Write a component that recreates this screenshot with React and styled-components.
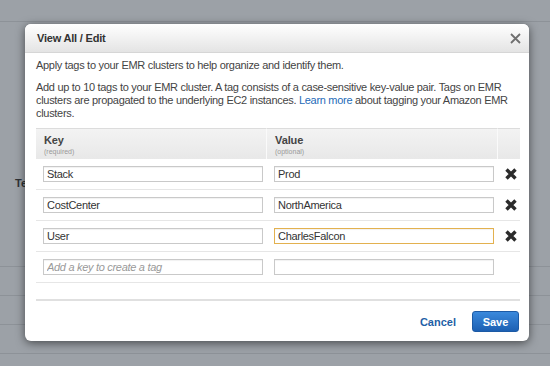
import React from "react";
import styled, { createGlobalStyle } from "styled-components";

const GlobalStyle = createGlobalStyle`
  body {
    margin: 0;
    font-family: "Liberation Sans", Arial, sans-serif;
  }
`;

const Page = styled.div`
  position: relative;
  width: 550px;
  height: 366px;
  overflow: hidden;
  background: #9ca1a7;
`;

const TopBar = styled.div`
  height: 21px;
  border-bottom: 1px solid #8d9298;
`;

const PageLabel = styled.div`
  margin: 154px 0 0 15px;
  font-size: 11px;
  line-height: 14px;
  font-weight: bold;
  color: #2f3236;
`;

const PageRows = styled.div`
  margin-top: 76px;
`;

const PageRow = styled.div`
  height: 28px;
  border-top: 1px solid #8d9298;
`;

const Modal = styled.div`
  position: absolute;
  left: 25px;
  top: 24px;
  width: 504px;
  height: 317px;
  display: flex;
  flex-direction: column;
  background: #fff;
  border-radius: 6px;
  box-shadow: 0 2px 10px rgba(0, 0, 0, 0.55);
  overflow: hidden;
`;

const Header = styled.div`
  height: 28px;
  flex: none;
  display: flex;
  align-items: center;
  justify-content: space-between;
  padding: 0 8px 0 12px;
  background: linear-gradient(#ffffff, #e4e4e4);
  border-bottom: 1px solid #d6d6d6;
`;

const Title = styled.div`
  font-size: 11px;
  letter-spacing: -0.2px;
  font-weight: bold;
  color: #333;
`;

const CloseButton = styled.button`
  border: 0;
  padding: 0;
  background: none;
  display: flex;
  cursor: pointer;
`;

const Body = styled.div`
  flex: 1;
  display: flex;
  flex-direction: column;
  padding: 0 9px 0 11px;
`;

const Text = styled.p`
  margin: ${(p) => p.$top}px 0 0;
  font-size: 11px;
  letter-spacing: -0.3px;
  line-height: 13px;
  color: #444;
`;

const LearnLink = styled.a`
  color: #1e6bb8;
  text-decoration: none;
`;

const Table = styled.div`
  margin-top: 8px;
  display: grid;
  grid-template-columns: 231px 231px 22px;
`;

const HeadCell = styled.div`
  height: 31px;
  box-sizing: border-box;
  padding: 5px 8px 0;
  background: linear-gradient(#f3f3f3, #e8e8e8);
  border-top: 1px solid #dcdcdc;
  border-right: ${(p) => (p.$last ? "none" : "1px solid #fafafa")};
`;

const HeadLabel = styled.div`
  font-size: 11px;
  letter-spacing: -0.1px;
  line-height: 13px;
  font-weight: bold;
  color: #444;
`;

const HeadHint = styled.div`
  font-size: 7px;
  line-height: 10px;
  color: #999;
`;

const Cell = styled.div`
  height: 31px;
  box-sizing: border-box;
  display: flex;
  align-items: center;
  justify-content: ${(p) => (p.$icon ? "center" : "flex-start")};
  padding-left: ${(p) => (p.$icon ? 0 : 7)}px;
  border-bottom: 1px solid #e6e6e6;
`;

const Input = styled.input`
  width: 220px;
  height: 16px;
  box-sizing: border-box;
  padding: 0 3px;
  font-family: "Liberation Sans", Arial, sans-serif;
  font-size: 11px;
  letter-spacing: -0.3px;
  color: #333;
  border: 1px solid ${(p) => (p.$focus ? "#e3b14f" : "#c9c9c9")};
  box-shadow: inset 0 1px 1px rgba(0, 0, 0, 0.06);
  outline: none;
  &::placeholder {
    color: #999;
    font-style: italic;
  }
`;

const DeleteButton = styled.button`
  border: 0;
  padding: 0;
  margin-left: 4px;
  background: none;
  display: flex;
  cursor: pointer;
`;

const Footer = styled.div`
  margin-top: 16px;
  border-top: 2px solid #e0e0e0;
  padding: 10px 1px 0 0;
  display: flex;
  justify-content: flex-end;
  align-items: center;
  gap: 16px;
`;

const Cancel = styled.button`
  border: 0;
  background: none;
  padding: 0;
  font-family: "Liberation Sans", Arial, sans-serif;
  font-size: 11px;
  font-weight: bold;
  color: #1f5fa6;
  cursor: pointer;
`;

const Save = styled.button`
  width: 47px;
  height: 21px;
  border: 1px solid #1c5aa5;
  border-radius: 3px;
  background: linear-gradient(#3a89dc, #1d60b3);
  color: #fff;
  font-family: "Liberation Sans", Arial, sans-serif;
  font-size: 11px;
  font-weight: bold;
  cursor: pointer;
`;

const CloseIcon = () => (
  <svg width="11" height="11" viewBox="0 0 11 11">
    <path d="M1 1 L10 10 M10 1 L1 10" stroke="#6f6f6f" strokeWidth="1.8" />
  </svg>
);

const DeleteIcon = () => (
  <svg width="12" height="12" viewBox="0 0 12 12">
    <path d="M1.5 1.5 L10.5 10.5 M10.5 1.5 L1.5 10.5" stroke="#2b2b2b" strokeWidth="3.4" />
  </svg>
);

const tags = [
  { key: "Stack", value: "Prod" },
  { key: "CostCenter", value: "NorthAmerica" },
  { key: "User", value: "CharlesFalcon", focus: true },
];

export default function App() {
  return (
    <>
      <GlobalStyle />
      <Page>
        <TopBar />
        <PageLabel>Termination protection</PageLabel>
        <PageRows>
          <PageRow />
          <PageRow />
          <PageRow />
          <PageRow />
        </PageRows>

        <Modal>
          <Header>
            <Title>View All / Edit</Title>
            <CloseButton aria-label="Close">
              <CloseIcon />
            </CloseButton>
          </Header>
          <Body>
            <Text $top={6}>
              Apply tags to your EMR clusters to help organize and identify them.
            </Text>
            <Text $top={9}>
              Add up to 10 tags to your EMR cluster. A tag consists of a
              case-sensitive key-value pair. Tags on EMR clusters are propagated
              to the underlying EC2 instances.{" "}
              <LearnLink href="#">Learn more</LearnLink> about tagging your
              Amazon EMR clusters.
            </Text>

            <Table>
              <HeadCell>
                <HeadLabel>Key</HeadLabel>
                <HeadHint>(required)</HeadHint>
              </HeadCell>
              <HeadCell>
                <HeadLabel>Value</HeadLabel>
                <HeadHint>(optional)</HeadHint>
              </HeadCell>
              <HeadCell $last />

              {tags.map((t) => (
                <React.Fragment key={t.key}>
                  <Cell>
                    <Input defaultValue={t.key} />
                  </Cell>
                  <Cell>
                    <Input defaultValue={t.value} $focus={t.focus} />
                  </Cell>
                  <Cell $icon>
                    <DeleteButton aria-label="Remove tag">
                      <DeleteIcon />
                    </DeleteButton>
                  </Cell>
                </React.Fragment>
              ))}

              <Cell>
                <Input placeholder="Add a key to create a tag" />
              </Cell>
              <Cell>
                <Input />
              </Cell>
              <Cell $icon />
            </Table>

            <Footer>
              <Cancel>Cancel</Cancel>
              <Save>Save</Save>
            </Footer>
          </Body>
        </Modal>
      </Page>
    </>
  );
}
